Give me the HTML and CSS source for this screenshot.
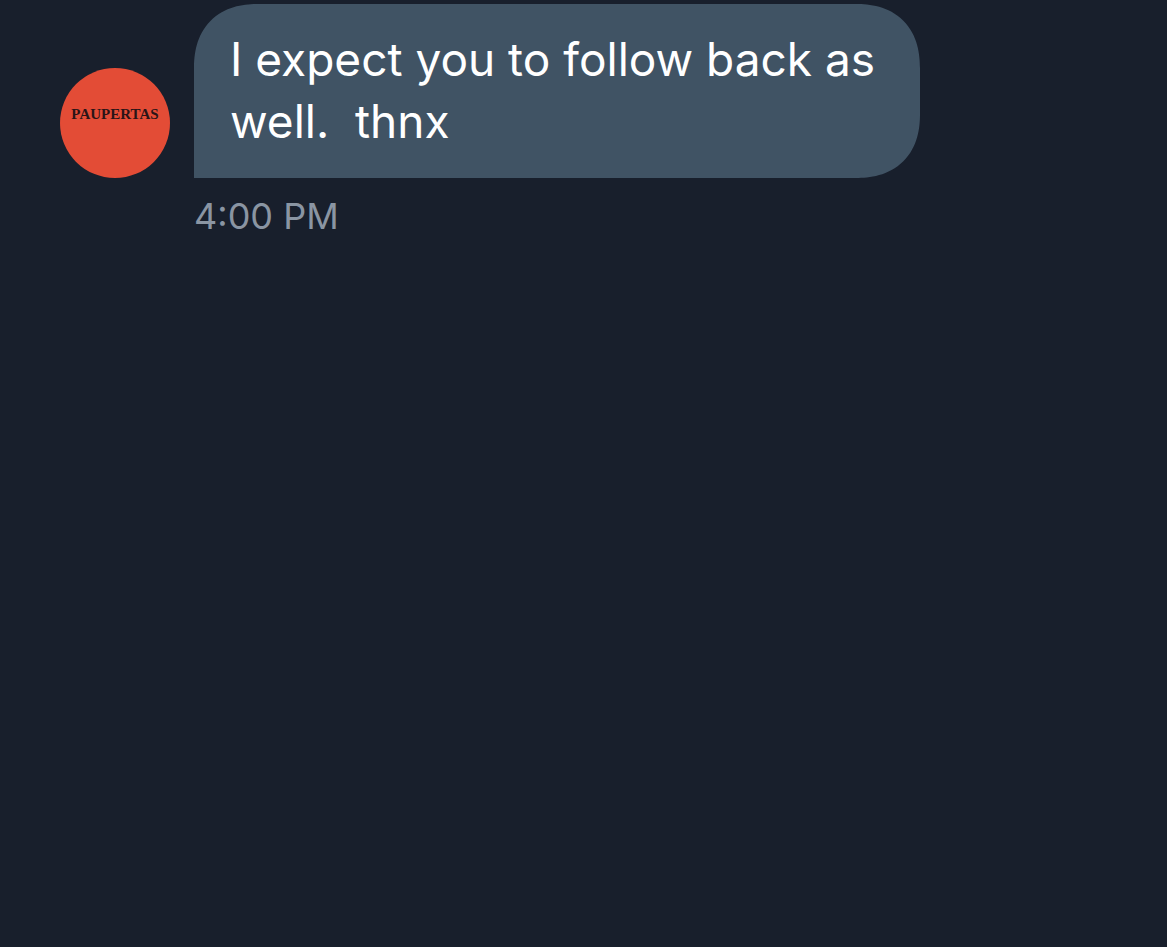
FILE: index.html
```html
<!DOCTYPE html>
<html lang="en">
<head>
<meta charset="utf-8">
<title>Messages</title>
<link rel="stylesheet" href="styles.css">
</head>
<body>
<main class="conversation">
  <article class="message">
    <div class="avatar"><span class="avatar-name">PAUPERTAS</span></div>
    <p class="bubble">I expect you to follow back as well.&nbsp; thnx</p>
    <time class="time" datetime="16:00">4:00 PM</time>
  </article>
</main>
</body>
</html>
```
FILE: styles.css
```css
body {
  margin: 0;
  background: #181f2c;
  font-family: Inter, "Liberation Sans", sans-serif;
}
.conversation {
  min-height: 100vh;
  box-sizing: border-box;
  padding: 4px 60px;
}
.message {
  display: grid;
  grid-template-columns: 110px minmax(0, 726px);
  column-gap: 24px;
  row-gap: 16px;
}
.avatar {
  align-self: end;
  display: flex;
  justify-content: center;
  box-sizing: border-box;
  width: 110px;
  height: 110px;
  padding-top: 36px;
  border-radius: 50%;
  background: #e34c36;
}
.avatar-name {
  color: #2a1417;
  font: bold 15px/20px "Liberation Serif", serif;
}
.bubble {
  margin: 0;
  padding: 24px 36px 26px;
  border-radius: 54px 54px 54px 0;
  background: #405364;
  color: #fff;
  font-size: 46px;
  line-height: 62px;
}
@supports (corner-shape: superellipse(1.2)) {
  .bubble {
    border-radius: 64px 64px 64px 0;
    corner-shape: superellipse(1.2);
  }
}
.time {
  grid-column: 2;
  color: #8a95a3;
  font-size: 36px;
  line-height: 44px;
}
```
